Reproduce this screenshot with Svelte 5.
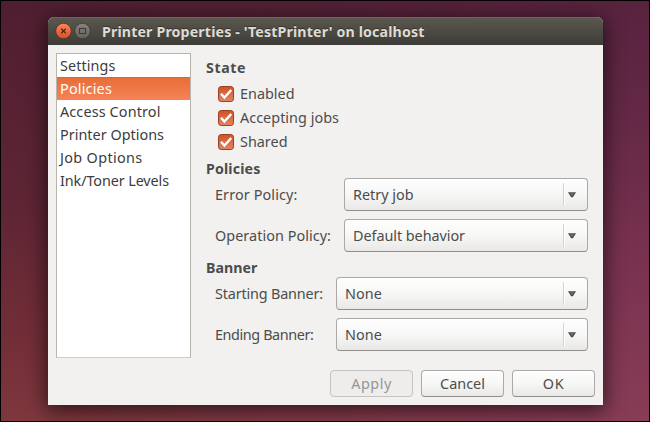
<script>
  const tabs = [
    { name: 'Settings', width: 55.5 },
    { name: 'Policies', width: 52 },
    { name: 'Access Control', width: 100.5 },
    { name: 'Printer Options', width: 104 },
    { name: 'Job Options', width: 82.5 },
    { name: 'Ink/Toner Levels', width: 109 }
  ];
  let selected = $state('Policies');

  let states = $state([
    { name: 'Enabled', width: 54.5, on: true },
    { name: 'Accepting jobs', width: 99, on: true },
    { name: 'Shared', width: 47.5, on: true }
  ]);

  const groups = [
    {
      title: 'Policies', width: 54.5, kind: 'policy',
      fields: [
        { label: 'Error Policy:', lw: 82.5, value: 'Retry job', vw: 60.5 },
        { label: 'Operation Policy:', lw: 116, value: 'Default behavior', vw: 112 }
      ]
    },
    {
      title: 'Banner', width: 51.5, kind: 'banner',
      fields: [
        { label: 'Starting Banner:', lw: 108, value: 'None', vw: 37 },
        { label: 'Ending Banner:', lw: 98.5, value: 'None', vw: 37 }
      ]
    }
  ];

  // Distributes tracking so a label occupies its intended width.
  function track(node, width) {
    const natural = node.getBoundingClientRect().width;
    const count = node.textContent.length;
    node.style.letterSpacing = `${(width - natural) / count}px`;
  }
</script>

<div class="desktop">
  <div class="window">
    <header>
      <svg class="controls" width="36" height="18" viewBox="0 0 36 18">
        <defs>
          <linearGradient id="close" x1="0" y1="0" x2="0" y2="1">
            <stop offset="0" stop-color="#f8875f" /><stop offset="1" stop-color="#e14c1d" />
          </linearGradient>
          <linearGradient id="max" x1="0" y1="0" x2="0" y2="1">
            <stop offset="0" stop-color="#85847c" /><stop offset="1" stop-color="#62615b" />
          </linearGradient>
        </defs>
        <circle cx="8.5" cy="9" r="7.8" fill="url(#close)" stroke="#3d352d" stroke-width=".8" />
        <path d="M6.2 6.7l4.6 4.6M10.8 6.7l-4.6 4.6" stroke="#45291d" stroke-width="1.3" />
        <circle cx="27.5" cy="9" r="7.8" fill="url(#max)" stroke="#3a3934" stroke-width=".8" />
        <rect x="24.5" y="6.5" width="6" height="5" fill="none" stroke="#3a3934" />
      </svg>
      <h1><span use:track={322.5}>Printer Properties - 'TestPrinter' on localhost</span></h1>
    </header>

    <main>
      <nav>
        {#each tabs as tab}
          <button class="tab" class:active={selected === tab.name} onclick={() => (selected = tab.name)}>
            <span use:track={tab.width}>{tab.name}</span>
          </button>
        {/each}
      </nav>

      <section class="panel">
        <h2><span use:track={40}>State</span></h2>
        <div class="checks">
          {#each states as item}
            <button class="check" onclick={() => (item.on = !item.on)}>
              <svg width="16" height="16" viewBox="0 0 16 16">
                <defs>
                  <linearGradient id="tick" x1="0" y1="0" x2="0" y2="1">
                    <stop offset="0" stop-color="#cf5227" /><stop offset="1" stop-color="#e48562" />
                  </linearGradient>
                </defs>
                <rect x=".5" y=".5" width="15" height="15" rx="2.8" fill={item.on ? 'url(#tick)' : '#fff'} stroke="#9b3f20" />
                {#if item.on}
                  <path d="M3 7.8l3.4 3.8 6.9-7.6" fill="none" stroke="#fff" stroke-width="2.3" />
                {/if}
              </svg>
              <span use:track={item.width}>{item.name}</span>
            </button>
          {/each}
        </div>

        {#each groups as group}
          <h2><span use:track={group.width}>{group.title}</span></h2>
          <div class="fields {group.kind}">
            {#each group.fields as field}
              <div class="field">
                <label for={field.label}><span use:track={field.lw}>{field.label}</span></label>
                <button class="combo" id={field.label}>
                  <span class="value"><span use:track={field.vw}>{field.value}</span></span>
                  <span class="drop">
                    <svg width="8" height="6" viewBox="0 0 8 6"><path d="M0 .3h8L4.9 5.3H3.1z" fill="#4a4a48" /><path d="M2 1.3h4L4 4z" fill="#70706e" /></svg>
                  </span>
                </button>
              </div>
            {/each}
          </div>
        {/each}
      </section>
    </main>

    <footer>
      <button class="action" disabled><span use:track={40.5}>Apply</span></button>
      <button class="action"><span use:track={45}>Cancel</span></button>
      <button class="action"><span use:track={21.5}>OK</span></button>
    </footer>
  </div>
</div>

<style>
  .desktop {
    position: relative;
    box-sizing: border-box;
    width: 650px;
    height: 422px;
    padding: 16px 46px 16px 47px;
    border: 1px solid #000;
    overflow: hidden;
    background: linear-gradient(174deg, #501e31 0%, #5e2534 42%, #742f38 72%, #883f42 100%);
    font: 14.4px/20px 'Noto Sans', 'Open Sans', sans-serif;
    color: #4c4c4c;
  }
  .desktop::before {
    content: '';
    position: absolute;
    inset: 0;
    background: linear-gradient(175deg, #53203b 0%, #632845 35%, #78324f 65%, #883c56 100%);
    mask-image: linear-gradient(to right, transparent 10%, #000 90%);
  }
  .window {
    position: relative;
    display: flex;
    flex-direction: column;
    width: 555px;
    height: 388px;
    border-radius: 6px 6px 0 0;
    background: #f2f1f0;
    box-shadow: 0 4px 20px 2px rgba(0, 0, 0, .6);
  }
  header {
    display: flex;
    align-items: center;
    box-sizing: border-box;
    height: 28px;
    padding-left: 7px;
    border-radius: 6px 6px 0 0;
    background: linear-gradient(#5b584e, #3d3c38);
    box-shadow: inset 0 1px #6b685b;
  }
  .controls { display: block; }
  h1, h2 { margin: 0; font-size: 14.2px; font-weight: 700; line-height: 20px; white-space: nowrap; }
  h1 { padding: 2px 0 0 11px; color: #dfdbd2; text-shadow: 0 -1px #33322d; }
  h2 { height: 19px; }
  span { white-space: nowrap; }
  main { display: flex; height: 313px; padding: 8px 8px 0; box-sizing: border-box; }
  nav {
    display: flex;
    flex-direction: column;
    box-sizing: border-box;
    width: 135px;
    height: 305px;
    border: 1px solid #b9b4ae;
    border-bottom-color: #cfcbc7;
    background: #fff;
  }
  button { margin: 0; border: 0; padding: 0; background: none; font: inherit; color: inherit; text-align: left; }
  .tab { height: 23px; padding-left: 3px; line-height: 23px; color: #3c3c3c; }
  .tab.active { background: linear-gradient(#e86d38, #f58357); box-shadow: inset 0 1px #dd6734; color: #fff; }
  .panel { flex: 1; padding: 5px 7px 0 15px; }
  .checks { display: flex; flex-direction: column; gap: 4px; padding: 7px 0 7px 12px; }
  .check { display: flex; align-items: center; gap: 6px; height: 20px; }
  .check svg { display: block; }
  .fields { display: flex; flex-direction: column; gap: 8px; }
  .field { display: flex; align-items: center; padding-left: 9px; }
  label { width: 129px; flex: none; }
  .banner label { width: 121px; }
  .policy { padding-bottom: 6px; }
  .combo, .action {
    box-sizing: border-box;
    border: 1px solid #aaa9a7;
    border-bottom-color: #8f8e8c;
    border-radius: 4px;
    background: linear-gradient(#fefefe, #f7f7f6 50%, #e9e8e7);
    box-shadow: inset 0 1px #fff;
  }
  .combo { display: flex; flex: 1; align-items: center; height: 33px; padding-left: 8px; }
  .value { flex: 1; }
  .drop {
    display: flex;
    align-items: center;
    box-sizing: border-box;
    width: 24px;
    height: 23px;
    padding: 1px 0 0 4px;
    border-left: 1px solid #d3d2d0;
    box-shadow: inset 1px 0 #fff;
  }
  footer { display: flex; justify-content: flex-end; gap: 8px; padding: 12px 8px 0; }
  .action { width: 83px; height: 27px; text-align: center; line-height: 25px; }
  .action:disabled { border-color: #c5c4c2; background: #eeedec; box-shadow: none; color: #969593; }
</style>
